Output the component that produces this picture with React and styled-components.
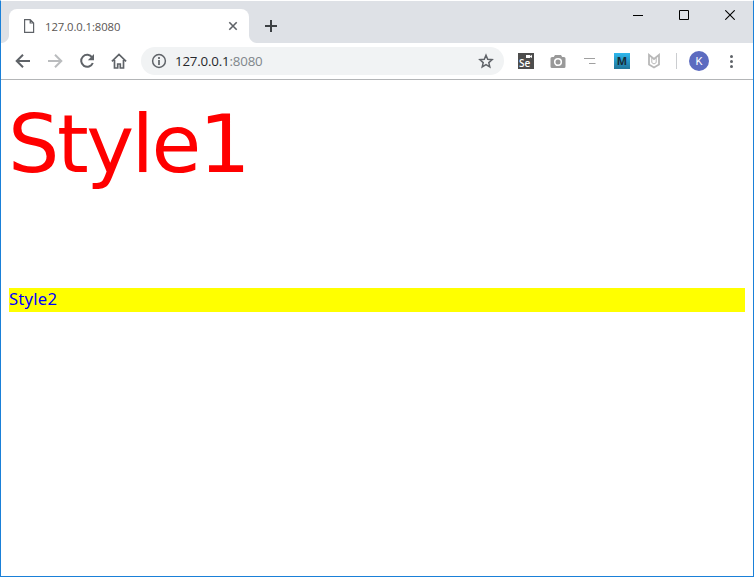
import React from "react";
import styled, { createGlobalStyle } from "styled-components";

const GlobalStyle = createGlobalStyle`
  * { box-sizing: border-box; }
  body { margin: 0; background: #fff; overflow: hidden; }
  svg { display: block; flex: none; }
`;

const Window = styled.div`
  width: 754px;
  height: 577px;
  display: flex;
  flex-direction: column;
  background: #fff;
  border: 1px solid #1a80d8;
  border-top-color: #fff;
  font-family: "Open Sans", "Noto Sans", sans-serif;
`;

const TabStrip = styled.header`
  height: 42px;
  flex: none;
  display: flex;
  align-items: flex-start;
  background: #dee1e6;
`;

const Tab = styled.div`
  position: relative;
  width: 240px;
  height: 34px;
  margin: 8px 0 0 8px;
  padding: 0 10px 0 14px;
  display: flex;
  align-items: center;
  background: #fff;
  border-radius: 8px 8px 0 0;

  &::before,
  &::after {
    content: "";
    position: absolute;
    bottom: 0;
    width: 8px;
    height: 8px;
  }
  &::before {
    left: -8px;
    background: radial-gradient(circle at 0 0, #dee1e6 7.5px, #fff 8.5px);
  }
  &::after {
    right: -8px;
    background: radial-gradient(circle at 100% 0, #dee1e6 7.5px, #fff 8.5px);
  }
`;

const TabTitle = styled.span`
  flex: 1;
  margin-left: 8px;
  padding-top: 2px;
  font-size: 11.3px;
  line-height: 16px;
  letter-spacing: -0.08px;
  color: #5a5552;
`;

const NewTab = styled.div`
  margin: 18px 0 0 15px;
`;

const WindowControls = styled.div`
  display: flex;
  gap: 36px;
  margin: 9px 18px 0 auto;
`;

const Toolbar = styled.nav`
  height: 37px;
  flex: none;
  display: flex;
  align-items: center;
  padding: 0 13px 0 14px;
  border-bottom: 1px solid #b3b5b7;
`;

const Navigation = styled.div`
  display: flex;
  gap: 16px;
`;

const AddressBar = styled.div`
  width: 363px;
  height: 28px;
  margin-left: 14px;
  padding: 0 10px 0 10px;
  display: flex;
  align-items: center;
  background: #f1f3f4;
  border-radius: 14px;
`;

const Address = styled.span`
  flex: 1;
  margin-left: 8px;
  font-size: 13.3px;
  line-height: 20px;
  letter-spacing: -0.18px;
  color: #26282c;
`;

const Port = styled.span`
  color: #80868b;
`;

const Extensions = styled.div`
  display: flex;
  align-items: center;
  gap: 16px;
  margin-left: 14px;
`;

const Divider = styled.div`
  width: 1px;
  height: 16px;
  margin-left: 14px;
  background: #cbcdd0;
`;

const Avatar = styled.div`
  width: 20px;
  height: 20px;
  margin: 0 14px 0 12px;
  border-radius: 50%;
  background: #5c6bc0;
  color: #fff;
  font: 11px/21px Roboto, sans-serif;
  text-align: center;
`;

const Page = styled.main`
  flex: 1;
  padding: 0 8px;
`;

const LargeText = styled.div`
  height: 208px;
  padding-top: 4px;
  color: #f00;
  font-family: "DejaVu Sans", Verdana, sans-serif;
  font-size: 81px;
  line-height: 120px;
  letter-spacing: -2.5px;
  text-indent: -1px;
`;

const HighlightedText = styled.div`
  height: 24px;
  background: #ff0;
  color: #00f;
  font-family: "Noto Sans", sans-serif;
  font-size: 16.6px;
  line-height: 22px;
  letter-spacing: 0.25px;
`;

const Icon = ({ size = 16, color = "#5f6368", children }) => (
  <svg width={size} height={size} viewBox={`0 0 ${size} ${size}`} fill="none" stroke={color} strokeWidth="2">
    {children}
  </svg>
);

const FileIcon = () => (
  <Icon size={14}>
    <path d="M1.6.6h5.6l3.4 3.4v9.4h-9zM7.2.6V4h3.4" strokeWidth="1.2" />
  </Icon>
);

const CloseIcon = () => (
  <Icon size={12}><path d="m2.3 2.3 7.4 7.4M9.7 2.3 2.3 9.7" strokeWidth="1.6" /></Icon>
);

const BackIcon = () => <Icon><path d="M15 8H2.5M8 1.7 1.7 8 8 14.3" /></Icon>;

const ForwardIcon = () => (
  <Icon color="#babcbe"><path d="M1 8h12.5M8 1.7 14.3 8 8 14.3" /></Icon>
);

const ReloadIcon = () => (
  <Icon>
    <path d="M13.2 4.5A6 6 0 1 0 13.8 10" />
    <path d="M15 1v6.2H8.8z" fill="#5f6368" stroke="none" />
  </Icon>
);

const HomeIcon = () => (
  <Icon>
    <path d="M.9 8.4 8 1.5l7.1 6.9M3.5 7v8h3.2v-4h2.6v4h3.2V7" strokeWidth="1.7" />
  </Icon>
);

const InfoIcon = () => (
  <Icon><circle cx="8" cy="8" r="6.4" strokeWidth="1.5" /><path d="M8 7v5M8 4v2" strokeWidth="1.7" /></Icon>
);

const StarIcon = () => (
  <Icon><path d="m8 2.2 1.7 4.1 4.4.4-3.3 2.9 1 4.4L8 11.7 4.2 14l1-4.4-3.3-2.9 4.4-.4z" strokeWidth="1.5" /></Icon>
);

const SeleniumIcon = () => (
  <svg width="16" height="16" viewBox="0 0 16 16">
    <path fill="#4d4d4d" d="M0 0h16v16H0z" />
    <path fill="#fff" d="M8 2h4v1l2-1v3l-2-1v1H8z" />
    <text x="1" y="14" fill="#fff" fontFamily="Open Sans" fontWeight="600" fontSize="10">Se</text>
  </svg>
);

const CameraIcon = () => (
  <svg width="16" height="16" viewBox="0 0 16 16">
    <path fill="#999" d="M5 2h6l1.2 2H14a1.5 1.5 0 0 1 1.5 1.5v8A1.5 1.5 0 0 1 14 15H2a1.5 1.5 0 0 1-1.5-1.5v-8A1.5 1.5 0 0 1 2 4h1.8z" />
    <circle cx="8" cy="9" r="3.3" fill="#999" stroke="#fff" strokeWidth="1.6" />
  </svg>
);

const LinesIcon = () => (
  <Icon color="#a0a0a0"><path d="M2 5.5h11M7 10.5h6.5" strokeWidth="1.2" /></Icon>
);

const LetterIcon = () => (
  <svg width="16" height="16" viewBox="0 0 16 16">
    <defs>
      <linearGradient id="blue-tile" x2="0" y2="1">
        <stop stopColor="#2db7ed" /><stop offset="1" stopColor="#20759a" />
      </linearGradient>
    </defs>
    <path fill="url(#blue-tile)" d="M0 0h16v16H0z" />
    <text x="8" y="12" textAnchor="middle" fill="#172c38" fontFamily="Open Sans" fontWeight="700" fontSize="11">M</text>
  </svg>
);

const ShieldIcon = () => (
  <Icon color="#b8b8b8">
    <path d="M3 11.4V1.9L8 6l5-4.1v9.5L8 14.4z" strokeWidth="1.8" />
    <path d="M5.8 5v4.6L8 11l2.2-1.4V5" strokeWidth="1" />
  </Icon>
);

const MenuIcon = () => (
  <Icon>
    <g fill="#5f6368" stroke="none">
      <circle cx="8.5" cy="3.4" r="1.5" /><circle cx="8.5" cy="8.4" r="1.5" /><circle cx="8.5" cy="13.4" r="1.5" />
    </g>
  </Icon>
);

export default function App() {
  return (
    <Window>
      <GlobalStyle />
      <TabStrip>
        <Tab>
          <FileIcon />
          <TabTitle>127.0.0.1:8080</TabTitle>
          <CloseIcon />
        </Tab>
        <NewTab>
          <Icon size={14} color="#3c4043"><path d="M7 1v12M1 7h12" /></Icon>
        </NewTab>
        <WindowControls>
          <Icon size={10} color="#000"><path d="M0 5.5h10" strokeWidth="1" /></Icon>
          <Icon size={10} color="#000"><path d="M.5.5h9v9h-9z" strokeWidth="1" /></Icon>
          <Icon size={10} color="#000"><path d="m.3.3 9.4 9.4M9.7.3.3 9.7" strokeWidth="1.1" /></Icon>
        </WindowControls>
      </TabStrip>
      <Toolbar>
        <Navigation><BackIcon /><ForwardIcon /><ReloadIcon /><HomeIcon /></Navigation>
        <AddressBar>
          <InfoIcon />
          <Address>127.0.0.1<Port>:8080</Port></Address>
          <StarIcon />
        </AddressBar>
        <Extensions><SeleniumIcon /><CameraIcon /><LinesIcon /><LetterIcon /><ShieldIcon /></Extensions>
        <Divider />
        <Avatar>K</Avatar>
        <MenuIcon />
      </Toolbar>
      <Page>
        <LargeText>Style1</LargeText>
        <HighlightedText>Style2</HighlightedText>
      </Page>
    </Window>
  );
}
